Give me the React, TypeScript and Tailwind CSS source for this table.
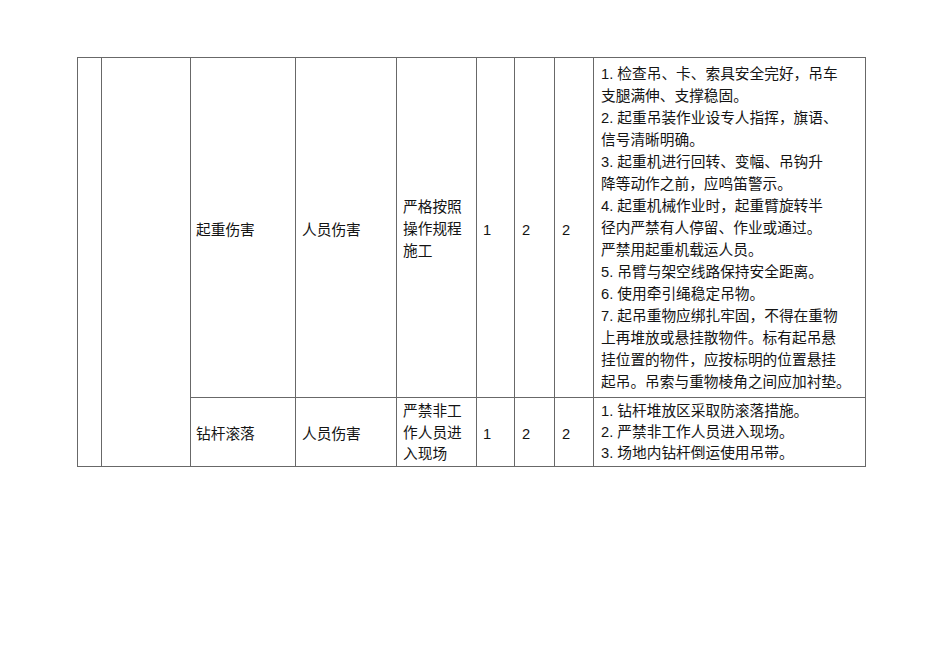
import React from "react";

const font = {
  fontFamily: '"Liberation Sans", "Noto Sans CJK SC", sans-serif',
};

const row1Lines = [
  "1. 检查吊、卡、索具安全完好，吊车",
  "支腿满伸、支撑稳固。",
  "2. 起重吊装作业设专人指挥，旗语、",
  "信号清晰明确。",
  "3. 起重机进行回转、变幅、吊钩升",
  "降等动作之前，应鸣笛警示。",
  "4. 起重机械作业时，起重臂旋转半",
  "径内严禁有人停留、作业或通过。",
  "严禁用起重机载运人员。",
  "5. 吊臂与架空线路保持安全距离。",
  "6. 使用牵引绳稳定吊物。",
  "7. 起吊重物应绑扎牢固，不得在重物",
  "上再堆放或悬挂散物件。标有起吊悬",
  "挂位置的物件，应按标明的位置悬挂",
  "起吊。吊索与重物棱角之间应加衬垫。",
];

const row2Lines = [
  "1. 钻杆堆放区采取防滚落措施。",
  "2. 严禁非工作人员进入现场。",
  "3. 场地内钻杆倒运使用吊带。",
];

function Lines({ lines, lh }: { lines: string[]; lh: string }) {
  return (
    <div className={lh}>
      {lines.map((l, i) => (
        <div key={i} className="whitespace-nowrap">
          {l}
        </div>
      ))}
    </div>
  );
}

const cell = "border border-[#686868] align-middle p-0";

export default function App() {
  return (
    <div className="w-[950px] h-[672px] bg-white text-[#141414]" style={font}>
      <div className="pt-[57px] pl-[77px]">
        <table className="border-collapse table-fixed text-[14.7px] w-[788px]">
          <colgroup>
            <col className="w-[24px]" />
            <col className="w-[89px]" />
            <col className="w-[105px]" />
            <col className="w-[101px]" />
            <col className="w-[80px]" />
            <col className="w-[38px]" />
            <col className="w-[40px]" />
            <col className="w-[39px]" />
            <col className="w-[272px]" />
          </colgroup>
          <tbody>
            <tr className="h-[340px]">
              <td rowSpan={2} className={cell}></td>
              <td rowSpan={2} className={cell}></td>
              <td className={`${cell} pl-[5px] pt-[5px]`}>起重伤害</td>
              <td className={`${cell} pl-[6px] pt-[5px]`}>人员伤害</td>
              <td className={`${cell} pl-[6px] pt-[5px]`}>
                <Lines lines={["严格按照", "操作规程", "施工"]} lh="leading-[21.7px]" />
              </td>
              <td className={`${cell} pl-[6px] pt-[5px]`}>1</td>
              <td className={`${cell} pl-[7px] pt-[5px]`}>2</td>
              <td className={`${cell} pl-[7px] pt-[5px]`}>2</td>
              <td className={`${cell} pl-[7px] pt-[4px] pb-[4px]`}>
                <Lines lines={row1Lines} lh="leading-[22px]" />
              </td>
            </tr>
            <tr className="h-[67px]">
              <td className={`${cell} pl-[5px] pt-[5px]`}>钻杆滚落</td>
              <td className={`${cell} pl-[6px] pt-[5px]`}>人员伤害</td>
              <td className={`${cell} pl-[6px] pt-[3px]`}>
                <Lines lines={["严禁非工", "作人员进", "入现场"]} lh="leading-[21.5px]" />
              </td>
              <td className={`${cell} pl-[6px] pt-[5px]`}>1</td>
              <td className={`${cell} pl-[7px] pt-[5px]`}>2</td>
              <td className={`${cell} pl-[7px] pt-[5px]`}>2</td>
              <td className={`${cell} pl-[7px] pt-[3px] align-top`}>
                <Lines lines={row2Lines} lh="leading-[21px]" />
              </td>
            </tr>
          </tbody>
        </table>
      </div>
    </div>
  );
}
